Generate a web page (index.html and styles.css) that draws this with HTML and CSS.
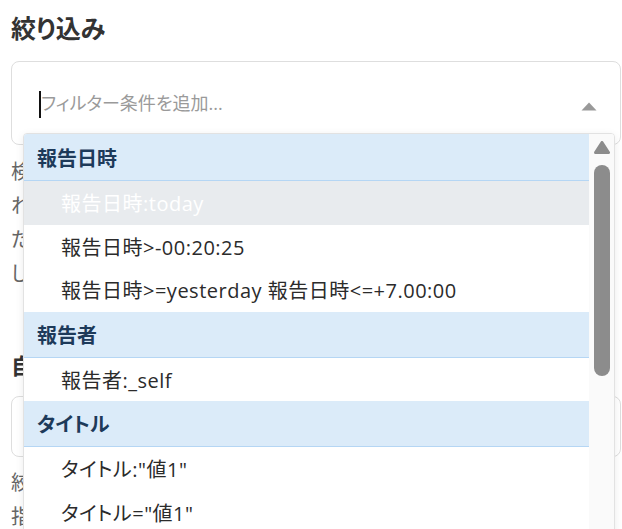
FILE: index.html
```html
<!DOCTYPE html>
<html lang="ja">
<head>
<meta charset="utf-8">
<title>絞り込み</title>
<link rel="stylesheet" href="styles.css">
</head>
<body>
<div class="page">
  <h2 class="title">絞り込み</h2>
  <div class="filter">
    <span class="caret"></span>
    <span class="placeholder">フィルター条件を追加...</span>
    <svg class="arrow" width="16" height="9" viewBox="0 0 16 9"><polygon points="8,0.5 15.5,8.5 0.5,8.5" fill="#999"/></svg>
    <div class="dropdown">
      <div class="list">
        <div class="group first">報告日時</div>
        <div class="option active">報告日時:today</div>
        <div class="option">報告日時&gt;-00:20:25</div>
        <div class="option">報告日時&gt;=yesterday 報告日時&lt;=+7.00:00</div>
        <div class="group">報告者</div>
        <div class="option">報告者:_self</div>
        <div class="group">タイトル</div>
        <div class="option">タイトル:"値1"</div>
        <div class="option">タイトル="値1"</div>
      </div>
      <div class="scrollbar">
        <svg class="scroll-up" width="16" height="13" viewBox="0 0 16 13"><polygon points="8,1.5 14.5,11.5 1.5,11.5" fill="#8c8c8c" stroke="#8c8c8c" stroke-width="3" stroke-linejoin="round"/></svg>
        <div class="thumb"></div>
      </div>
    </div>
  </div>
  <p class="help">検索条件を入力して一覧を絞り込みます。条件は複数指定<br>れた条件をすべて満たす項目だけが表示されます。日時<br>たり、キーワードも使えます。候補から選択するか、入<br>して Enter キーを押すと条件が追加されます。</p>
  <h3 class="subtitle">自動更新</h3>
  <div class="field"></div>
  <p class="help">絞り込み条件に一致する一覧を自動的に更新する間隔<br>指定しない場合は自動更新は行われません。</p>
</div>
</body>
</html>
```
FILE: styles.css
```css
html, body {
  margin: 0;
  padding: 0;
  overflow: hidden;
  background: #fff;
}
body {
  font-family: "Open Sans", "Noto Sans CJK JP", sans-serif;
  font-feature-settings: "palt";
  color: #333;
}
.page {
  width: 610px;
  margin-left: 11px;
  padding-top: 12px;
}
.title {
  margin: 0;
  font-size: 25px;
  line-height: 32px;
  font-weight: 700;
  color: #333;
}
.filter {
  position: relative;
  margin-top: 17px;
  height: 84px;
  box-sizing: border-box;
  border: 1px solid #dedede;
  border-radius: 8px;
  display: flex;
  align-items: center;
  padding: 0 23px 0 27px;
}
.caret {
  width: 2px;
  height: 27px;
  background: #111;
  margin-top: 2px;
}
.placeholder {
  font-size: 18px;
  line-height: 24px;
  color: #9a9a9a;
}
.arrow {
  margin-left: auto;
  margin-top: 6px;
}
.dropdown {
  position: absolute;
  top: 71px;
  left: 11px;
  width: 592px;
  height: 420px;
  box-sizing: border-box;
  border: 1px solid #e2e2e2;
  border-radius: 4px 4px 0 0;
  background: #fff;
  box-shadow: 0 2px 8px rgba(0, 0, 0, 0.08);
  display: flex;
  overflow: hidden;
  z-index: 5;
}
.list {
  flex: 1;
  display: flex;
  flex-direction: column;
}
.group {
  height: 46px;
  box-sizing: border-box;
  background: #dbebf9;
  border-bottom: 1px solid #b5d6f4;
  padding-left: 13px;
  display: flex;
  align-items: center;
  font-size: 20px;
  font-weight: 700;
  color: #1d3a5a;
}
.group.first {
  height: 47px;
}
.option {
  height: 43.5px;
  display: flex;
  align-items: center;
  padding-left: 37px;
  font-size: 20px;
  letter-spacing: 0.5px;
  color: #2b2b2b;
  white-space: nowrap;
  flex-shrink: 0;
}
.option.active {
  background: #e8ebee;
  color: #fff;
}
.scrollbar {
  width: 25px;
  background: #fafafa;
  display: flex;
  flex-direction: column;
  align-items: center;
  padding-top: 7px;
}
.scroll-up {
  display: block;
}
.thumb {
  margin-top: 11px;
  width: 16px;
  height: 211px;
  border-radius: 8px;
  background: #8c8c8c;
}
.help {
  margin: 10px 0 0;
  font-size: 20px;
  line-height: 34px;
  color: #666;
  white-space: nowrap;
  overflow: hidden;
}
.subtitle {
  margin: 58px 0 0;
  font-size: 22px;
  line-height: 32px;
  font-weight: 700;
  color: #333;
}
.field {
  margin-top: 15px;
  height: 61px;
  box-sizing: border-box;
  border: 1px solid #dedede;
  border-radius: 8px;
}
.field + .help {
  margin-top: 9px;
}
```
